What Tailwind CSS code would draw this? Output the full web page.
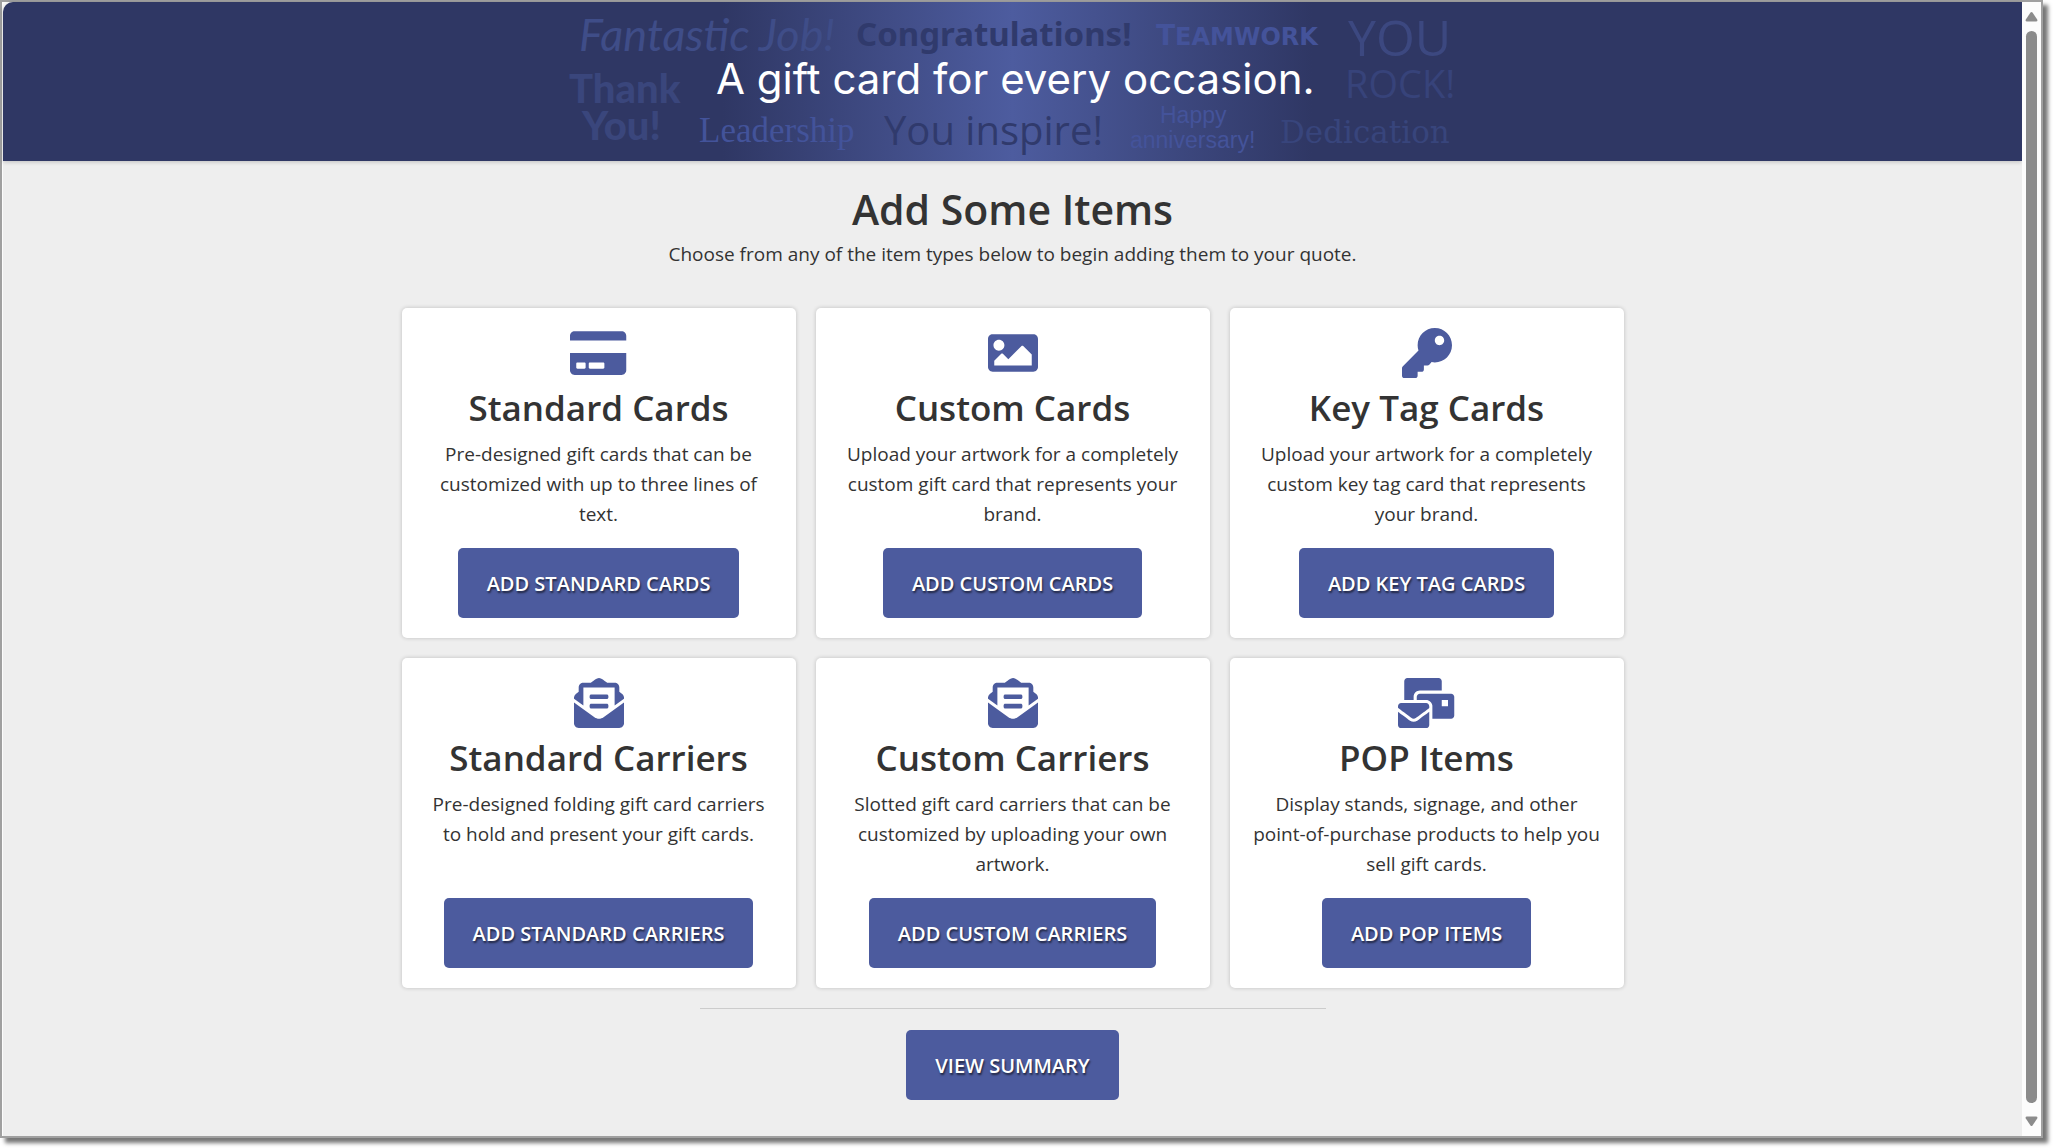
<!DOCTYPE html>
<html lang="en">
<head>
<meta charset="utf-8">
<meta name="viewport" content="width=device-width, initial-scale=1">
<title>Add Some Items</title>
<script src="https://cdn.jsdelivr.net/npm/@tailwindcss/browser@4"></script>
</head>
<body class="bg-white font-['Open_Sans','Noto_Sans',sans-serif] text-[19px] leading-[30px] text-[#333]">
<div class="flex min-h-screen pr-[10px] pb-[10px]">
  <div class="flex flex-1 border-2 border-[#a0a0a0] bg-[#fcfcfc] pl-px shadow-[5px_5px_4px_#777]">
    <div class="flex min-w-0 flex-1 flex-col rounded-tl-[10px] bg-[#eee]">
      <!-- Banner -->
      <header class="flex justify-center overflow-hidden rounded-tl-[10px] bg-[#2f3764] bg-[linear-gradient(90deg,#2f3764_calc(50%_-_290px),#4d5c9f_50%,#2f3764_calc(50%_+_300px))] shadow-[0_1px_4px_#0003]">
        <svg class="h-[159px] w-[960px] shrink-0" viewBox="0 0 960 159" role="img" aria-label="A gift card for every occasion.">
          <g class="font-['Open_Sans',sans-serif]">
            <text x="46" y="49" class="fill-[#3f4d88] font-['Lato',cursive] text-[45px] italic">Fantastic Job!</text>
            <text x="323" y="44" class="fill-[#303a6c] font-['Noto_Sans',sans-serif] text-[33px] font-bold">Congratulations!</text>
            <text x="623" y="43" class="fill-[#44539a] font-['DejaVu_Sans',sans-serif] text-[28px] font-bold">T<tspan class="text-[24px]">EAMWORK</tspan></text>
            <text x="815" y="54" class="fill-[#3c4880] text-[50px]">YOU</text>
            <text x="812" y="96" class="fill-[#37437a] text-[38px]">ROCK!</text>
            <text x="36" y="101" class="fill-[#3a467c] font-['Lato',sans-serif] text-[40px] font-black">Thank</text>
            <text x="49" y="138" class="fill-[#3a467c] font-['Lato',sans-serif] text-[40px] font-black">You!</text>
            <text x="166" y="140" class="fill-[#43539a] font-['Liberation_Serif',serif] text-[35px]">Leadership</text>
            <text x="351" y="143" class="fill-[#303a6c] text-[40px]">You inspire!</text>
            <text x="627" y="121" class="fill-[#44539a] font-['Liberation_Sans',sans-serif] text-[23px]">Happy</text>
            <text x="597" y="146" class="fill-[#44539a] font-['Liberation_Sans',sans-serif] text-[23px]">anniversary!</text>
            <text x="747" y="141" class="fill-[#38457c] font-['DejaVu_Serif',serif] text-[31px]">Dedication</text>
            <text x="183" y="92" class="fill-white font-['Inter',sans-serif] text-[42px]">A gift card for every occasion.</text>
          </g>
        </svg>
      </header>

      <main class="flex flex-col items-center px-5 pt-[22px] pb-8 text-center">
        <h1 class="text-[41px] leading-[52px] font-semibold">Add Some Items</h1>
        <p class="mt-1">Choose from any of the item types below to begin adding them to your quote.</p>

        <div class="mt-[39px] grid w-full max-w-[1222px] grid-cols-1 gap-5 md:grid-cols-3">
          <section class="flex flex-col items-center rounded-[5px] bg-white p-5 shadow-[0_0_4px_#0003]">
            <svg class="h-[50px] fill-[#4c5b9e]" viewBox="0 0 576 512" aria-hidden="true"><path d="M0 432c0 26.5 21.5 48 48 48h480c26.5 0 48-21.5 48-48V256H0v176zm192-68c0-6.6 5.4-12 12-12h136c6.6 0 12 5.4 12 12v40c0 6.6-5.4 12-12 12H204c-6.6 0-12-5.4-12-12v-40zm-128 0c0-6.6 5.4-12 12-12h72c6.6 0 12 5.4 12 12v40c0 6.6-5.4 12-12 12H76c-6.6 0-12-5.4-12-12v-40zM576 80v48H0V80c0-26.5 21.5-48 48-48h480c26.5 0 48 21.5 48 48z"/></svg>
            <h2 class="mt-[6px] text-[35px] leading-[48px] font-semibold">Standard Cards</h2>
            <p class="mt-[7px] mb-[19px]">Pre-designed gift cards that can be customized with up to three lines of text.</p>
            <button type="button" class="mt-auto rounded-[5px] bg-[#4c5b9e] px-[29px] pt-[21px] pb-[19px] text-[20px] leading-[30px] font-semibold text-white uppercase text-shadow-[1px_2px_2px_#0009]">Add Standard Cards</button>
          </section>

          <section class="flex flex-col items-center rounded-[5px] bg-white p-5 shadow-[0_0_4px_#0003]">
            <svg class="h-[50px] fill-[#4c5b9e]" viewBox="0 0 512 512" aria-hidden="true"><path d="M464 448H48c-26.51 0-48-21.49-48-48V112c0-26.51 21.49-48 48-48h416c26.51 0 48 21.49 48 48v288c0 26.51-21.49 48-48 48zM112 120c-30.928 0-56 25.072-56 56s25.072 56 56 56 56-25.072 56-56-25.072-56-56-56zM64 384h384V272l-87.515-87.515c-4.686-4.686-12.284-4.686-16.971 0L208 320l-55.515-55.515c-4.686-4.686-12.284-4.686-16.971 0L64 336v48z"/></svg>
            <h2 class="mt-[6px] text-[35px] leading-[48px] font-semibold">Custom Cards</h2>
            <p class="mt-[7px] mb-[19px]">Upload your artwork for a completely custom gift card that represents your brand.</p>
            <button type="button" class="mt-auto rounded-[5px] bg-[#4c5b9e] px-[29px] pt-[21px] pb-[19px] text-[20px] leading-[30px] font-semibold text-white uppercase text-shadow-[1px_2px_2px_#0009]">Add Custom Cards</button>
          </section>

          <section class="flex flex-col items-center rounded-[5px] bg-white p-5 shadow-[0_0_4px_#0003]">
            <svg class="h-[50px] fill-[#4c5b9e]" viewBox="0 0 512 512" aria-hidden="true"><path d="M512 176.001C512 273.203 433.202 352 336 352c-11.22 0-22.19-1.062-32.827-3.069l-24.012 27.014A23.999 23.999 0 0 1 261.223 384H224v40c0 13.255-10.745 24-24 24h-40v40c0 13.255-10.745 24-24 24H24c-13.255 0-24-10.745-24-24v-78.059c0-6.365 2.529-12.47 7.029-16.971l161.802-161.802C163.108 213.814 160 195.271 160 176 160 78.798 238.797.001 335.999 0 433.488-.001 512 78.511 512 176.001zM336 128c0 26.51 21.49 48 48 48s48-21.49 48-48-21.49-48-48-48-48 21.49-48 48z"/></svg>
            <h2 class="mt-[6px] text-[35px] leading-[48px] font-semibold">Key Tag Cards</h2>
            <p class="mt-[7px] mb-[19px]">Upload your artwork for a completely custom key tag card that represents your brand.</p>
            <button type="button" class="mt-auto rounded-[5px] bg-[#4c5b9e] px-[29px] pt-[21px] pb-[19px] text-[20px] leading-[30px] font-semibold text-white uppercase text-shadow-[1px_2px_2px_#0009]">Add Key Tag Cards</button>
          </section>

          <section class="flex flex-col items-center rounded-[5px] bg-white p-5 shadow-[0_0_4px_#0003]">
            <svg class="h-[50px] fill-[#4c5b9e]" viewBox="0 0 512 512" aria-hidden="true"><path d="M176 216h160c8.84 0 16-7.16 16-16v-16c0-8.84-7.16-16-16-16H176c-8.84 0-16 7.16-16 16v16c0 8.84 7.16 16 16 16zm-16 80c0 8.84 7.16 16 16 16h160c8.84 0 16-7.16 16-16v-16c0-8.84-7.16-16-16-16H176c-8.84 0-16 7.16-16 16v16zm96 121.13c-16.42 0-32.84-5.06-46.86-15.19L0 250.86V464c0 26.51 21.49 48 48 48h416c26.51 0 48-21.49 48-48V250.86L302.86 401.94c-14.02 10.12-30.44 15.19-46.86 15.19zm237.61-254.18c-8.85-6.94-17.24-13.47-29.61-22.81V96c0-26.51-21.49-48-48-48h-77.55c-3.04-2.2-5.87-4.26-9.04-6.56C312.6 29.17 279.2-.35 256 0c-23.2-.35-56.59 29.17-73.41 41.44-3.17 2.3-6 4.36-9.04 6.56H96c-26.51 0-48 21.49-48 48v44.14c-12.37 9.33-20.76 15.87-29.61 22.81A47.995 47.995 0 0 0 0 200.72v10.65l96 69.35V96h320v184.72l96-69.35v-10.65c0-14.74-6.78-28.67-18.39-37.77z"/></svg>
            <h2 class="mt-[6px] text-[35px] leading-[48px] font-semibold">Standard Carriers</h2>
            <p class="mt-[7px] mb-[19px]">Pre-designed folding gift card carriers to hold and present your gift cards.</p>
            <button type="button" class="mt-auto rounded-[5px] bg-[#4c5b9e] px-[29px] pt-[21px] pb-[19px] text-[20px] leading-[30px] font-semibold text-white uppercase text-shadow-[1px_2px_2px_#0009]">Add Standard Carriers</button>
          </section>

          <section class="flex flex-col items-center rounded-[5px] bg-white p-5 shadow-[0_0_4px_#0003]">
            <svg class="h-[50px] fill-[#4c5b9e]" viewBox="0 0 512 512" aria-hidden="true"><path d="M176 216h160c8.84 0 16-7.16 16-16v-16c0-8.84-7.16-16-16-16H176c-8.84 0-16 7.16-16 16v16c0 8.84 7.16 16 16 16zm-16 80c0 8.84 7.16 16 16 16h160c8.84 0 16-7.16 16-16v-16c0-8.84-7.16-16-16-16H176c-8.84 0-16 7.16-16 16v16zm96 121.13c-16.42 0-32.84-5.06-46.86-15.19L0 250.86V464c0 26.51 21.49 48 48 48h416c26.51 0 48-21.49 48-48V250.86L302.86 401.94c-14.02 10.12-30.44 15.19-46.86 15.19zm237.61-254.18c-8.85-6.94-17.24-13.47-29.61-22.81V96c0-26.51-21.49-48-48-48h-77.55c-3.04-2.2-5.87-4.26-9.04-6.56C312.6 29.17 279.2-.35 256 0c-23.2-.35-56.59 29.17-73.41 41.44-3.17 2.3-6 4.36-9.04 6.56H96c-26.51 0-48 21.49-48 48v44.14c-12.37 9.33-20.76 15.87-29.61 22.81A47.995 47.995 0 0 0 0 200.72v10.65l96 69.35V96h320v184.72l96-69.35v-10.65c0-14.74-6.78-28.67-18.39-37.77z"/></svg>
            <h2 class="mt-[6px] text-[35px] leading-[48px] font-semibold">Custom Carriers</h2>
            <p class="mt-[7px] mb-[19px]">Slotted gift card carriers that can be customized by uploading your own artwork.</p>
            <button type="button" class="mt-auto rounded-[5px] bg-[#4c5b9e] px-[29px] pt-[21px] pb-[19px] text-[20px] leading-[30px] font-semibold text-white uppercase text-shadow-[1px_2px_2px_#0009]">Add Custom Carriers</button>
          </section>

          <section class="flex flex-col items-center rounded-[5px] bg-white p-5 shadow-[0_0_4px_#0003]">
            <svg class="h-[50px] fill-[#4c5b9e]" viewBox="0 0 576 512" aria-hidden="true"><path d="M160 448c-25.6 0-51.2-22.4-64-32-64-44.8-83.2-60.8-96-70.4V480c0 17.67 14.33 32 32 32h256c17.67 0 32-14.33 32-32V345.6c-12.8 9.6-32 25.6-96 70.4-12.8 9.6-38.4 32-64 32zm128-192H32c-17.67 0-32 14.33-32 32v16c25.6 19.2 22.4 19.2 115.2 86.4 9.6 6.4 28.8 25.6 44.8 25.6s35.2-19.2 44.8-22.4c92.8-67.2 89.6-67.2 115.2-86.4V288c0-17.67-14.33-32-32-32zm256-96H224c-17.67 0-32 14.33-32 32v32h96c33.21 0 60.59 25.42 63.71 57.82l.29-.22V416h192c17.67 0 32-14.33 32-32V192c0-17.67-14.33-32-32-32zm-32 128h-64v-64h64v64zm-352-96c0-35.29 28.71-64 64-64h224V32c0-17.67-14.33-32-32-32H96C78.33 0 64 14.33 64 32v192h96v-32z"/></svg>
            <h2 class="mt-[6px] text-[35px] leading-[48px] font-semibold">POP Items</h2>
            <p class="mt-[7px] mb-[19px]">Display stands, signage, and other point-of-purchase products to help you sell gift cards.</p>
            <button type="button" class="mt-auto rounded-[5px] bg-[#4c5b9e] px-[29px] pt-[21px] pb-[19px] text-[20px] leading-[30px] font-semibold text-white uppercase text-shadow-[1px_2px_2px_#0009]">Add POP Items</button>
          </section>
        </div>

        <hr class="mt-5 mb-[21px] w-full max-w-[626px] border-t border-[#ccc]">
        <button type="button" class="rounded-[5px] bg-[#4c5b9e] px-[29px] pt-[21px] pb-[19px] text-[20px] leading-[30px] font-semibold text-white uppercase text-shadow-[1px_2px_2px_#0009]">View Summary</button>
      </main>
    </div>

    <!-- Scroll bar -->
    <div class="flex w-[19px] flex-col items-center bg-[#fcfcfc] py-[9px]" aria-hidden="true">
      <svg class="h-[12px] w-[13px] fill-[#8b8b8b]" viewBox="0 0 13 12"><path d="M5.500 1.600Q6.500.2 7.500 1.600L12.200 8.500Q13 10.500 11 10.500H2Q0 10.500.8 8.500z"/></svg>
      <div class="my-2 w-[11px] flex-1 rounded-full bg-[#8b8b8b]"></div>
      <svg class="mt-1 h-[12px] w-[13px] fill-[#8b8b8b]" viewBox="0 0 13 12"><path d="M5.500 10.400Q6.500 11.800 7.500 10.400L12.200 3.500Q13 1.500 11 1.500H2Q0 1.500.8 3.500z"/></svg>
    </div>
  </div>
</div>
</body>
</html>
